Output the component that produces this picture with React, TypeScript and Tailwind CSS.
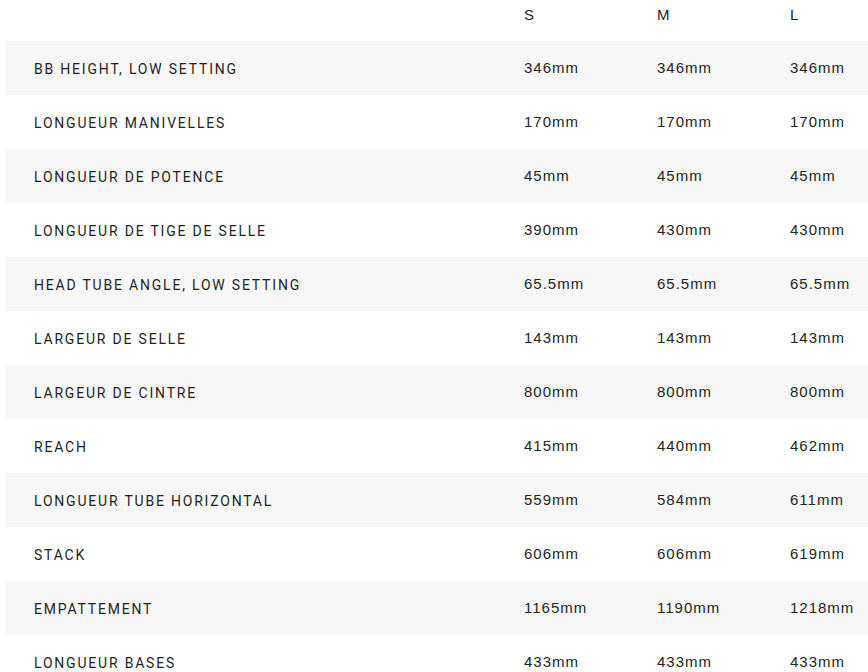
import React from 'react';

interface Row {
  label: string;
  s: string;
  m: string;
  l: string;
}

const rows: Row[] = [
  { label: 'BB HEIGHT, LOW SETTING', s: '346mm', m: '346mm', l: '346mm' },
  { label: 'LONGUEUR MANIVELLES', s: '170mm', m: '170mm', l: '170mm' },
  { label: 'LONGUEUR DE POTENCE', s: '45mm', m: '45mm', l: '45mm' },
  { label: 'LONGUEUR DE TIGE DE SELLE', s: '390mm', m: '430mm', l: '430mm' },
  { label: 'HEAD TUBE ANGLE, LOW SETTING', s: '65.5mm', m: '65.5mm', l: '65.5mm' },
  { label: 'LARGEUR DE SELLE', s: '143mm', m: '143mm', l: '143mm' },
  { label: 'LARGEUR DE CINTRE', s: '800mm', m: '800mm', l: '800mm' },
  { label: 'REACH', s: '415mm', m: '440mm', l: '462mm' },
  { label: 'LONGUEUR TUBE HORIZONTAL', s: '559mm', m: '584mm', l: '611mm' },
  { label: 'STACK', s: '606mm', m: '606mm', l: '619mm' },
  { label: 'EMPATTEMENT', s: '1165mm', m: '1190mm', l: '1218mm' },
  { label: 'LONGUEUR BASES', s: '433mm', m: '433mm', l: '433mm' },
];

const grid = 'grid grid-cols-[518px_133px_133px_1fr]';
const valueFont = "text-[15px] tracking-[1px] font-['Liberation_Sans',Arial,sans-serif]";

export default function App() {
  return (
    <div className="h-[672px] w-[868px] overflow-hidden bg-white pl-[6px] text-[#231f1c]">
      {/* Header */}
      <div className={`${grid} h-[41px] pt-[4px] ${valueFont}`}>
        <div />
        <div>S</div>
        <div>M</div>
        <div>L</div>
      </div>

      {/* Rows */}
      {rows.map((row, i) => (
        <div
          key={row.label}
          className={`${grid} h-[54px] items-center ${i % 2 === 0 ? 'bg-[#f7f7f7]' : 'bg-white'}`}
        >
          <div className="pl-[28px] pt-[2px] text-[14px] tracking-[1.8px] font-['Roboto','DejaVu_Sans',sans-serif]">
            {row.label}
          </div>
          <div className={valueFont}>{row.s}</div>
          <div className={valueFont}>{row.m}</div>
          <div className={`${valueFont} whitespace-nowrap`}>{row.l}</div>
        </div>
      ))}
    </div>
  );
}
